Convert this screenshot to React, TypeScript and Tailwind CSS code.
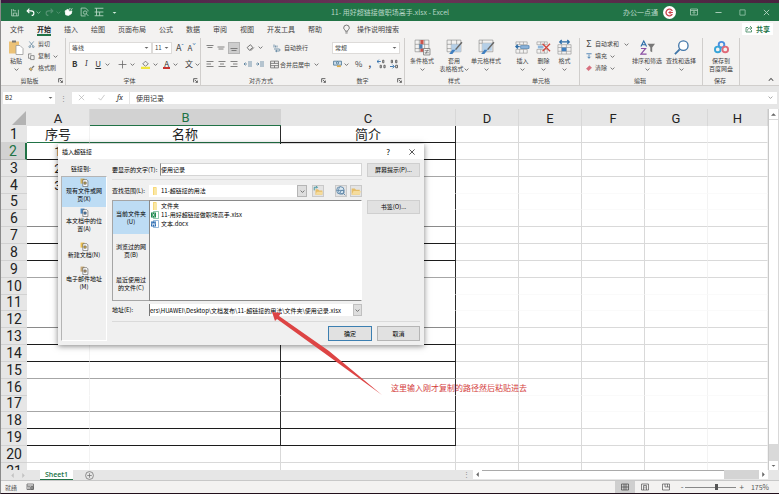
import React from 'react';

type SvgProps = React.PropsWithChildren<{ className?: string; box?: string }>;

const Svg: React.FC<SvgProps> = ({ className = 'w-[11px] h-[11px] text-[#555]', box = '0 0 16 16', children }) => (
  <svg viewBox={box} className={`shrink-0 ${className}`} fill="none" stroke="currentColor" strokeWidth="1.4" aria-hidden="true">
    {children}
  </svg>
);

const Caret: React.FC<{ className?: string }> = ({ className = 'text-[#666]' }) => (
  <Svg box="0 0 8 8" className={`w-[5px] h-[5px] ${className}`}>
    <path d="M1 2.5l3 3 3-3" />
  </Svg>
);

const Solid: React.FC<{ d: string; className?: string }> = ({ d, className = 'text-[#666]' }) => (
  <svg viewBox="0 0 8 8" className={`w-[5px] h-[5px] shrink-0 ${className}`} fill="currentColor" aria-hidden="true">
    <path d={d} />
  </svg>
);

const DOWN = 'M1 3h6L4 6z';
const UP = 'M0 6h8L4 2z';
const LEFT = 'M6 0v8L2 4z';
const RIGHT = 'M2 0v8l4-4z';

/* ---------- title bar ---------- */

const TitleBar = () => (
  <header className="flex h-[18px] shrink-0 items-center bg-[#217346] text-[7px] text-[#b9d8c6]">
    <div className="flex flex-1 items-center pl-[9px]">
      <button aria-label="保存" className="mr-[6px]">
        <Svg className="h-[9px] w-[10px]"><path d="M2 2v12h12V3M5 14V9h6v5M5 2v3h5" /></Svg>
      </button>
      <button aria-label="撤消" className="mr-px text-white">
        <Svg className="h-[10px] w-[9px]"><path d="M6 2L2 6l4 4M2 6h7c7 0 6 8 1 8" strokeWidth="2" /></Svg>
      </button>
      <Caret className="text-[#8fc0a5]" />
      <button aria-label="恢复" className="ml-[4px] mr-[2px] text-[#559273]">
        <Svg className="h-[10px] w-[9px]"><path d="M10 2l4 4-4 4M14 6H7c-7 0-6 8-1 8" strokeWidth="2" /></Svg>
      </button>
      <Caret className="text-[#559273]" />
      <button aria-label="触摸" className="ml-[3px] mr-[7px] text-white">
        <Svg className="h-[10px] w-[9px]"><path d="M2 6l5-3 3 4 4-1-1 5-5 3-5-1z" fill="currentColor" /><path d="M9 4l2-3M12 4l3-2" /></Svg>
      </button>
      <button aria-label="打印预览" className="mr-[5px]">
        <Svg className="h-[10px] w-[9px]"><path d="M10 15H2V1h8l4 4v2" /><circle cx="9" cy="9" r="3" /><path d="M11 11l4 4" /></Svg>
      </button>
      <button aria-label="边框" className="mr-[8px]">
        <Svg className="h-[10px] w-[10px]"><path d="M1 2h14M1 8h14M1 14h14M4 2v12M9 8v6" /></Svg>
      </button>
      <Solid d={DOWN} className="text-[#d5eadd]" />
    </div>
    <h1 className="whitespace-pre">11- 用好超链接做职场高手.xlsx - Excel</h1>
    <div className="flex flex-1 items-center justify-end pr-[9px]">
      <span className="mr-[5px]">办公一点通</span>
      <span className="mr-[14px] flex h-[13px] w-[13px] items-center justify-center rounded-full bg-white">
        <Svg className="h-[9px] w-[9px] text-[#c8434b]"><path d="M13 5a6 6 0 100 6" strokeWidth="2.4" /><path d="M6 8h8M9 5v6" strokeWidth="2" /></Svg>
      </span>
      <button aria-label="功能区显示选项" className="mr-[17px]">
        <Svg className="h-[8px] w-[8px]"><path d="M1 2h14v12H1zM1 5h14M8 13V7M5 10l3-3 3 3" /></Svg>
      </button>
      <button aria-label="最小化" className="mr-[17px]">
        <Svg className="h-[7px] w-[7px]"><path d="M1 8h14" strokeWidth="2" /></Svg>
      </button>
      <button aria-label="最大化" className="mr-[17px] text-[#8fc0a5]">
        <Svg className="h-[7px] w-[7px]"><path d="M2 2h12v12H2z" strokeWidth="2" /></Svg>
      </button>
      <button aria-label="关闭">
        <Svg className="h-[7px] w-[7px]"><path d="M2 2l12 12M14 2L2 14" strokeWidth="2" /></Svg>
      </button>
    </div>
  </header>
);

/* ---------- ribbon ---------- */

const TABS = ['文件', '开始', '插入', '绘图', '页面布局', '公式', '数据', '审阅', '视图', '开发工具', '帮助'];

const TabStrip = () => (
  <nav className="flex h-[16px] shrink-0 items-center bg-[#f3f2f1] pl-[9px] pr-[6px] text-[7px] text-[#444]">
    <div className="flex items-center gap-[13px]">
      {TABS.map(tab => (
        <button
          key={tab}
          className={tab === '开始'
            ? 'h-[13px] border-b-2 border-[#217346] font-bold leading-[12px] text-[#222]'
            : 'h-[13px] border-b-2 border-transparent leading-[12px]'}
        >
          {tab}
        </button>
      ))}
    </div>
    <button className="ml-[20px] flex items-center gap-[6px]">
      <Svg className="h-[10px] w-[9px] text-[#555]"><path d="M6 12c0-3-3-3-3-6a5 5 0 0110 0c0 3-3 3-3 6zM6 15h4" /></Svg>
      操作说明搜索
    </button>
    <button className="ml-auto flex h-[12px] w-[31px] items-center justify-center gap-[3px] bg-white font-bold text-[#217346]">
      <Svg className="h-[8px] w-[8px]"><path d="M6 5H2v9h11v-4M5 11c0-4 3-5 8-5M10 2l4 4-4 4" /></Svg>
      共享
    </button>
  </nav>
);

const Group: React.FC<React.PropsWithChildren<{ label: string; className: string; launcher?: boolean }>> = ({ label, className, launcher, children }) => (
  <section className={`flex shrink-0 flex-col ${className}`}>
    <div className="h-[37px]">{children}</div>
    <div className="flex h-[10px] items-center pr-[2px]">
      <span className="flex-1 text-center">{label}</span>
      {launcher && (
        <button aria-label={`${label}设置`}>
          <Svg className="h-[5px] w-[5px] text-[#555]" box="0 0 8 8"><path d="M1 7V1h6M3 3l4 4M7 4v3H4" /></Svg>
        </button>
      )}
    </div>
  </section>
);

const BigButton: React.FC<React.PropsWithChildren<{ lines: string[]; className?: string; caretAfter?: boolean }>> = ({ lines, className = '', caretAfter, children }) => (
  <button className={`flex shrink-0 flex-col items-center pt-px leading-[8px] ${className}`}>
    {children}
    <span className="mt-[1px] whitespace-nowrap">{lines[0]}</span>
    {lines[1]
      ? <span className="flex items-center whitespace-nowrap">{lines[1]}{caretAfter && <Caret />}</span>
      : <span className="flex h-[8px] items-center"><Caret /></span>}
  </button>
);

const Lines: React.FC<{ d: string }> = ({ d }) => (
  <Svg className="h-[10px] w-[8px] text-[#666]"><path d={d} strokeWidth="1.6" /></Svg>
);

const Rule = () => <span className="h-[11px] w-px bg-[#d5d3d1]" />;

const ICON = 'w-[17px] h-[17px] text-[#777]';

const Ribbon = () => (
  <div className="flex h-[49px] shrink-0 overflow-hidden border-b border-[#d0cecc] bg-[#f3f2f1] pt-[1px] text-[6px] text-[#444]">
    <Group label="剪贴板" launcher className="w-[65px] border-r border-[#d0cecc]">
      <div className="flex">
        <BigButton lines={['粘贴']} className="ml-[6px] w-[18px]">
          <Svg className="h-[17px] w-[16px]">
            <path d="M1 2h10v12H1z" fill="#ecc277" stroke="none" />
            <path d="M4 1h4v2H4z" fill="#777" stroke="none" />
            <path d="M8 6h4l3 3v6H8z" fill="#fff" stroke="#999" strokeWidth=".8" />
          </Svg>
        </BigButton>
        <div className="ml-[3px] flex flex-col leading-[12px]">
          <button className="flex items-center gap-[3px]">
            <Svg className="h-[9px] w-[7px] text-[#44708f]"><path d="M3 1l8 10M13 1L5 11" /><circle cx="4" cy="13" r="2" /><circle cx="12" cy="13" r="2" /></Svg>剪切
          </button>
          <button className="flex items-center gap-[3px]">
            <Svg className="h-[9px] w-[7px] text-[#555]"><path d="M6 12H1V2h7M6 6h8v9H6z" /></Svg>复制<Caret />
          </button>
          <button className="flex items-center gap-[3px]">
            <Svg className="h-[9px] w-[7px] text-[#777]"><path d="M2 9l5 5 3-5-4-3z" fill="#e8b95b" /><path d="M9 7l5-5" strokeWidth="3" /></Svg>格式刷
          </button>
        </div>
      </div>
    </Group>

    <Group label="字体" launcher className="w-[135px] border-r border-[#d0cecc]">
      <div className="flex h-[19px] items-center pl-[3px]">
        <button className="flex h-[12px] w-[83px] items-center justify-between border border-[#dddbd9] bg-white px-[2px]">等线<Solid d={DOWN} /></button>
        <button className="flex h-[12px] w-[20px] items-center justify-between border border-[#dddbd9] bg-white px-[2px]">11<Solid d={DOWN} /></button>
        <button className="ml-[4px] flex text-[9px] leading-[10px]">A<span className="text-[6px] leading-[6px] text-[#2b6ca8]">ˆ</span></button>
        <button className="ml-[4px] flex text-[8px] leading-[10px]">A<span className="text-[6px] leading-[6px] text-[#2b6ca8]">ˇ</span></button>
      </div>
      <div className="flex h-[14px] items-center pl-[6px] text-[8px] text-[#333]">
        <button className="mr-[7px] font-bold">B</button>
        <button className="mr-[7px] w-[5px] font-serif italic">I</button>
        <button className="mr-[4px] underline">U</button>
        <Caret />
        <span className="ml-[4px] mr-[4px]"><Rule /></span>
        <Svg className="mr-[3px] h-[9px] w-[9px] text-[#666]"><path d="M8 1v14M1 8h14" /></Svg>
        <Caret />
        <span className="mx-[3px]"><Rule /></span>
        <Svg className="mr-[3px] h-[11px] w-[9px] text-[#666]"><path d="M3 7l5-5 5 5-5 4z" /><path d="M0 14h16" stroke="#f0e63c" strokeWidth="4" /></Svg>
        <Caret />
        <button className="ml-[5px] mr-[3px] h-[10px] border-b-2 border-[#c8322f] px-[1px] leading-[9px]">A</button>
        <Caret />
        <span className="ml-[4px] mr-[3px]"><Rule /></span>
        <button className="mr-[2px] text-[8px]">文</button>
        <Caret />
      </div>
    </Group>

    <Group label="对齐方式" launcher className="w-[127px]">
      <div className="flex h-[19px] items-center gap-[3px] pl-[5px]">
        <Lines d="M1 3h14M3 7h10" />
        <Lines d="M1 6h14M3 10h10" />
        <span className="flex h-[12px] w-[12px] items-center justify-center border border-[#b5b5b5] bg-[#cdcdcd]"><Lines d="M1 9h14M3 13h10" /></span>
        <Svg className="ml-[3px] h-[9px] w-[9px] text-[#555]"><path d="M2 8l6-5 4 5-6 5zM8 14l6-6" /></Svg>
        <Caret />
        <button className="ml-[7px] flex items-center gap-[3px]">
          <Svg className="h-[10px] w-[8px] text-[#44708f]"><path d="M2 1v6M5 3v4M8 3v4M2 10h10c3 0 3 4 0 4H6M8 12l-3 2 3 2" /></Svg>自动换行
        </button>
      </div>
      <div className="flex h-[14px] items-center gap-[4px] pl-[5px]">
        <Lines d="M1 3h14M1 8h9M1 13h14" />
        <Lines d="M1 3h14M4 8h8M1 13h14" />
        <Lines d="M1 3h14M6 8h9M1 13h14" />
        <span className="ml-[2px] flex gap-[4px]">
          <Svg className="h-[10px] w-[8px] text-[#44708f]"><path d="M8 4h8M8 8h8M8 12h8M6 8H0M3 5L0 8l3 3" /></Svg>
          <Svg className="h-[10px] w-[8px] text-[#44708f]"><path d="M8 4h8M8 8h8M8 12h8M0 8h6M3 5l3 3-3 3" /></Svg>
        </span>
        <button className="ml-[2px] flex items-center gap-[1px] whitespace-nowrap">
          <Svg className="h-[9px] w-[9px] text-[#666]"><path d="M1 2h14v12H1zM1 6h14M1 10h14M8 2v4M8 10v4" /></Svg>合并后居中
        </button>
        <Caret />
      </div>
    </Group>

    <Group label="数字" launcher className="w-[77px] border-r border-[#d0cecc]">
      <div className="flex h-[19px] items-center pl-[4px]">
        <button className="flex h-[12px] w-[68px] items-center justify-between border border-[#dddbd9] bg-white px-[2px]">常规<Solid d={DOWN} /></button>
      </div>
      <div className="flex h-[14px] items-center pl-[5px] text-[8px]">
        <Svg className="mr-[2px] h-[10px] w-[9px] text-[#44708f]"><path d="M1 3h14v7H1z" fill="#cfe0ee" /><circle cx="8" cy="6" r="2" /><path d="M7 12h7" stroke="#ddaa44" strokeWidth="3" /></Svg>
        <Caret />
        <span className="ml-[6px]">%</span>
        <span className="ml-[6px] w-[4px] font-bold">,</span>
        <Svg className="ml-[5px] h-[10px] w-[10px] text-[#555]"><path d="M6 4H0M3 1L0 4l3 3" stroke="#2b6ca8" /><path d="M9 2h2v4H9zM5 10h2v4H5zM11 10h2v4h-2z" /></Svg>
        <Svg className="ml-[3px] h-[10px] w-[10px] text-[#555]"><path d="M2 2h2v4H2zM9 2h2v4H9zM9 10h3v4H9z" /><path d="M0 12h6M4 9l3 3-3 3" stroke="#2b6ca8" /></Svg>
      </div>
    </Group>

    <Group label="样式" className="w-[100px]">
      <div className="flex">
        <BigButton lines={['条件格式']} className="w-[34px]">
          <Svg className={ICON}>
            <path d="M1 1h13v11H1zM5 1v11M10 1v11M1 5h13M1 9h13" strokeWidth=".5" />
            <path d="M6 1h3v4H6zM6 9h3v3H6z" fill="#c9554d" stroke="none" /><path d="M5 5h3v4H5z" fill="#4d7fb3" stroke="none" />
            <path d="M9 9h6v6H9z" fill="#fff" strokeWidth=".8" /><path d="M10 11h4M10 13h4M13 10l-2 4" strokeWidth=".8" />
          </Svg>
        </BigButton>
        <BigButton lines={['套用', '表格格式']} caretAfter className="w-[30px]">
          <Svg className={ICON}>
            <path d="M1 1h13v11H1zM5 1v11M10 1v11M1 5h13M1 9h13" strokeWidth=".5" />
            <path d="M5 5h9v7H5z" fill="#b5cfe7" stroke="none" /><path d="M15 3L9 10" stroke="#666" strokeWidth="1.4" /><path d="M9 10l-3 4H3l3-4z" fill="#3f7fc0" stroke="none" />
          </Svg>
        </BigButton>
        <BigButton lines={['单元格样式']} className="w-[34px]">
          <Svg className={ICON}>
            <path d="M1 1h13v11H1zM4 1v11M1 4h13" strokeWidth=".5" />
            <path d="M4 4h9v7H4z" fill="#b5cfe7" stroke="none" /><path d="M15 3L9 10" stroke="#666" strokeWidth="1.4" /><path d="M9 10l-3 4H3l3-4z" fill="#3f7fc0" stroke="none" />
          </Svg>
        </BigButton>
      </div>
    </Group>

    <Group label="单元格" className="w-[75px] border-r border-[#d0cecc]">
      <div className="flex pl-[7px]">
        <BigButton lines={['插入']} className="w-[21px]">
          <Svg className="h-[17px] w-[15px] text-[#999]">
            <path d="M1 2h12v3H1zM1 10h12v4H1zM5 2v3M9 2v3M5 10v4M9 10v4" strokeWidth=".7" /><path d="M6 6h9v3H6z" fill="#8fb7dd" stroke="#3f75a8" strokeWidth=".7" /><path d="M5 7H1M3 5L1 7l2 2" stroke="#2b6ca8" />
          </Svg>
        </BigButton>
        <BigButton lines={['删除']} className="w-[21px]">
          <Svg className="h-[17px] w-[15px] text-[#999]">
            <path d="M1 2h11v3H1zM1 10h11v4H1zM5 2v3M9 2v3M5 10v4M9 10v4" strokeWidth=".7" /><path d="M2 6h6v3H2z" fill="#8fb7dd" stroke="none" /><path d="M7 4l8 8M15 4l-8 8" stroke="#d0473f" />
          </Svg>
        </BigButton>
        <BigButton lines={['格式']} className="w-[21px]">
          <Svg className="h-[17px] w-[15px] text-[#999]">
            <path d="M1 5h14v10H1zM5 5v10M10 5v10M1 8h14M1 12h14" strokeWidth=".7" /><path d="M5 8h5v4H5z" fill="#3f7fc0" stroke="none" /><path d="M3 2h10M5 0L3 2l2 2M11 0l2 2-2 2" stroke="#2b6ca8" />
          </Svg>
        </BigButton>
      </div>
    </Group>

    <Group label="编辑" className="w-[123px] border-r border-[#d0cecc]">
      <div className="flex">
        <div className="flex w-[50px] flex-col pl-[6px] leading-[12px]">
          <button className="flex items-center gap-[3px] whitespace-nowrap"><span className="w-[6px] text-[9px]">Σ</span>自动求和<span className="ml-[2px]"><Caret /></span></button>
          <button className="flex items-center gap-[3px]"><Svg className="h-[8px] w-[6px] text-[#2b6ca8]"><path d="M1 2h14M8 4v10M4 10l4 4 4-4" strokeWidth="2" /></Svg>填充<Caret /></button>
          <button className="flex items-center gap-[3px]"><Svg className="h-[8px] w-[6px] text-[#d8707f]"><path d="M1 10l8-8 6 5-8 8z" fill="currentColor" /></Svg>清除<Caret /></button>
        </div>
        <BigButton lines={['排序和筛选']} className="w-[34px]">
          <Svg className="h-[17px] w-[15px] text-[#777]">
            <path d="M1 7l3-6 3 6M2 5h4" stroke="#2b6ca8" strokeWidth="1.2" /><path d="M1 9h5l-5 6h6" stroke="#8a4fa3" strokeWidth="1.2" /><path d="M8 4h8l-3 4v5l-2-1V8z" fill="currentColor" stroke="none" />
          </Svg>
        </BigButton>
        <BigButton lines={['查找和选择']} className="w-[34px]">
          <Svg className="h-[17px] w-[15px] text-[#3f75a8]"><circle cx="10" cy="6" r="5" fill="#fff" /><path d="M6 10l-5 5" strokeWidth="2" /></Svg>
        </BigButton>
      </div>
    </Group>

    <Group label="保存" className="w-[37px] border-r border-[#d0cecc]">
      <BigButton lines={['保存到', '百度网盘']} className="w-full">
        <Svg className="h-[17px] w-[15px]"><circle cx="8" cy="5" r="3" stroke="#4a8fe0" strokeWidth="2" /><circle cx="4" cy="10" r="3" stroke="#37a4d8" strokeWidth="2" /><circle cx="12" cy="10" r="3" stroke="#e06a78" strokeWidth="2" /></Svg>
      </BigButton>
    </Group>
    <button aria-label="折叠功能区" className="ml-auto self-end pb-[2px] pr-[5px]">
      <Svg className="h-[6px] w-[6px] text-[#555]" box="0 0 8 8"><path d="M1 5l3-3 3 3" /></Svg>
    </button>
  </div>
);

const FormulaBar = () => (
  <div className="flex h-[23px] shrink-0 items-center bg-[#e6e6e6] px-[2px] text-[7px] text-[#333]">
    <button className="flex h-[12px] w-[52px] items-center justify-between bg-white px-[2px] text-[6px]">B2<Solid d={DOWN} /></button>
    <span className="w-[17px] text-center leading-[12px] text-[#888]">⋮</span>
    <div className="flex h-[12px] w-[57px] items-center justify-around bg-white">
      <Svg className="h-[7px] w-[7px] text-[#aaa]"><path d="M2 2l12 12M14 2L2 14" /></Svg>
      <Svg className="h-[7px] w-[7px] text-[#aaa]"><path d="M1 9l5 5L15 2" /></Svg>
      <span className="font-serif text-[8px] italic">fx</span>
    </div>
    <input aria-label="编辑栏" defaultValue="使用记录" className="ml-[1px] h-[12px] min-w-0 flex-1 bg-white pl-[6px] outline-none" />
    <span className="flex h-[12px] w-[9px] items-center bg-white"><Caret className="text-[#999]" /></span>
  </div>
);

/* ---------- sheet ---------- */

const COLUMNS = ['A', 'B', 'C', 'D', 'E', 'F', 'G', 'H'];
const ROWS = Array.from({ length: 21 }, (_, i) => i + 1);

const CELLS: Record<string, string> = { A1: '序号', B1: '名称', C1: '简介', A2: '1', A3: '2', A4: '3' };

const rowLine = (row: number, inTable: boolean) => {
  if (!inTable || row > 19) {
    if (row % 6 === 4 || row % 6 === 5) return 'border-b border-b-[#fafafa]';
    return 'border-b border-b-[#d9d9d9]';
  }
  if (row === 17) return 'border-b border-b-[#a6a6a6]';
  if (row % 6 === 4 || row % 6 === 5) return 'border-b border-b-white';
  if (row % 6 === 3) return 'border-b border-b-[#a6a6a6]';
  if (row % 6 === 0 && row < 18) return 'border-b border-b-[#8a8a8a]';
  return 'border-b border-b-[#1c1c1c]';
};

const colLine = (col: string, row: number) => {
  if ((col === 'B' || col === 'C') && row < 20) return 'border-r border-r-[#2b2b2b]';
  if (col === 'A' || col === 'G' || col === 'H') return 'border-r border-r-[#f3f3f3]';
  return 'border-r border-r-[#d9d9d9]';
};

const cellClass = (col: string, row: number) => {
  if (row === 1 && (col === 'A' || col === 'B')) return `border-b border-b-[#217346] ${colLine(col, row)}`;
  return `${rowLine(row, col < 'D')} ${colLine(col, row)}`;
};

const Sheet = () => (
  <div className="flex min-h-0 flex-1 bg-[#e6e6e6]">
    <div className="min-w-0 flex-1 overflow-hidden">
      <table className="w-full table-fixed border-separate border-spacing-0 bg-white font-[Roboto,'Noto_Sans_CJK_SC',sans-serif] text-[13px] leading-[15px]">
        <colgroup>
          <col className="w-[26px]" />
          <col className="w-[63px]" />
          <col className="w-[191px]" />
          <col className="w-[175px]" />
          <col className="w-[63px]" />
          <col className="w-[63px]" />
          <col className="w-[63px]" />
          <col className="w-[63px]" />
          <col />
        </colgroup>
        <thead>
          <tr className="h-[17px]">
            <th className="bg-[#e6e6e6] p-0">
              <svg viewBox="0 0 14 14" className="ml-auto mr-px h-[14px] w-[14px]" aria-hidden="true"><path d="M14 0v14H0z" fill="#b3b3b3" /></svg>
            </th>
            {COLUMNS.map(col => (
              <th
                key={col}
                className={col === 'B'
                  ? 'border-b border-[#217346] bg-[#d2d2d2] p-0 align-bottom text-[13px] font-normal text-[#217346]'
                  : 'border-r border-[#d8d8d8] bg-[#e6e6e6] p-0 align-bottom text-[13px] font-normal text-[#222]'}
              >
                {col}
              </th>
            ))}
          </tr>
        </thead>
        <tbody>
          {ROWS.map(row => (
            <tr key={row} className={row % 6 === 5 ? 'h-[16px]' : 'h-[17px]'}>
              <th className={row === 2
                ? 'border-r-2 border-b border-r-[#217346] border-b-[#bbb] bg-[#d2d2d2] p-0 text-[14px] font-normal leading-[15px] text-[#217346]'
                : 'border-b border-[#d2d2d2] bg-[#e6e6e6] p-0 text-[14px] font-normal leading-[15px] text-[#222]'}
              >
                {row}
              </th>
              {COLUMNS.map(col => (
                <td key={col} className={`overflow-hidden p-0 text-center text-[#222] ${cellClass(col, row)}`}>
                  {CELLS[col + row]}
                </td>
              ))}
            </tr>
          ))}
        </tbody>
      </table>
    </div>
    <div className="flex w-[11px] flex-col border-l border-[#c8c8c8] bg-[#d9d9d9] pr-px">
      <button aria-label="向上滚动" className="flex h-[10px] items-center justify-center bg-white"><Solid d={UP} /></button>
      <div className="mt-px flex-1 bg-white" />
      <div className="h-[17px]" />
      <button aria-label="向下滚动" className="flex h-[9px] items-center justify-center bg-white"><Solid d={DOWN} /></button>
    </div>
  </div>
);

const SheetTabs = () => (
  <div className="flex h-[11px] shrink-0 items-start border-b border-[#c8c8c8] bg-[#e6e6e6] text-[7px]">
    <div className="flex h-[10px] w-[39px] items-center gap-[6px] pl-[9px]">
      <Solid d={LEFT} className="text-[#c2c2c2]" />
      <Solid d={RIGHT} className="text-[#c2c2c2]" />
    </div>
    <button className="h-[10px] w-[33px] border-b border-[#217346] bg-white text-center font-[Open_Sans] font-semibold leading-[9px] text-[#217346]">Sheet1</button>
    <button aria-label="新工作表" className="ml-[12px] flex h-[10px] items-center">
      <Svg className="h-[9px] w-[9px] text-[#777]"><circle cx="8" cy="8" r="7" /><path d="M8 4v8M4 8h8" /></Svg>
    </button>
    <div className="ml-auto flex h-[9px] w-[316px] items-center">
      <span className="mr-[2px] w-[8px] text-[#888]">⋮</span>
      <button aria-label="向左滚动" className="flex h-[9px] w-[9px] items-center justify-center bg-white"><Solid d={LEFT} /></button>
      <div className="h-[9px] flex-1 border-t border-[#aaa] bg-white" />
      <div className="h-[9px] w-[35px] bg-[#d4d4d4]" />
      <button aria-label="向右滚动" className="mr-[11px] flex h-[9px] w-[9px] items-center justify-center bg-white"><Solid d={RIGHT} /></button>
    </div>
  </div>
);

const StatusBar = () => (
  <footer className="flex h-[12px] shrink-0 items-center bg-[#f3f2f1] pl-[4px] pr-[10px] text-[6px] text-[#555]">
    就绪
    <Svg className="ml-[9px] h-[8px] w-[9px] text-[#555]"><path d="M1 2h13v11H1zM1 6h13M5 6v7" /><circle cx="11" cy="10" r="3" fill="#999" /></Svg>
    <div className="ml-auto flex h-full items-center">
      <button aria-label="普通" className="flex h-full w-[20px] items-center justify-center bg-[#cfcfcf]">
        <Svg className="h-[8px] w-[8px] text-[#444]"><path d="M1 2h14v12H1zM1 8h14M6 2v12M10 2v12" /></Svg>
      </button>
      <button aria-label="页面布局" className="flex w-[21px] justify-center">
        <Svg className="h-[8px] w-[8px] text-[#555]"><path d="M1 2h14v12H1zM5 14V5h6v9M8 7v4" /></Svg>
      </button>
      <button aria-label="分页预览" className="flex w-[21px] justify-center">
        <Svg className="h-[8px] w-[8px] text-[#555]"><path d="M1 2h14v12H1zM6 2v6h5V2M11 8h4" /></Svg>
      </button>
      <span className="ml-[4px] mr-[2px] text-[8px] leading-[8px]">-</span>
      <input
        type="range"
        aria-label="缩放"
        min={10}
        max={400}
        defaultValue={250}
        className="h-px w-[51px] appearance-none bg-[#888] [&::-webkit-slider-thumb]:h-[6px] [&::-webkit-slider-thumb]:w-[3px] [&::-webkit-slider-thumb]:appearance-none [&::-webkit-slider-thumb]:bg-[#555]"
      />
      <span className="ml-[3px] text-[8px] leading-[8px]">+</span>
      <span className="ml-[7px] text-[7px]">175%</span>
    </div>
  </footer>
);

/* ---------- insert hyperlink dialog ---------- */

const LINK_TARGETS = [
  { lines: ['现有文件或网', '页(X)'], tint: '#d5b45c', className: 'h-[30px] pt-px bg-[#bddcf4]' },
  { lines: ['本文档中的位', '置(A)'], tint: '#4d8ac6', className: 'h-[35px] pt-px' },
  { lines: ['新建文档(N)'], tint: '#f0c24c', className: 'h-[24px]' },
  { lines: ['电子邮件地址', '(M)'], tint: '#c9ab78', className: 'h-[28px]' },
];

const PLACES = [
  { lines: ['当前文件夹', '(U)'], className: 'bg-[#bddcf4]' },
  { lines: ['浏览过的网', '页(B)'], className: '' },
  { lines: ['最近使用过', '的文件(C)'], className: '' },
];

const Folder: React.FC<{ className?: string }> = ({ className = '' }) => (
  <svg viewBox="0 0 8 8" className={`h-[8px] w-[8px] shrink-0 ${className}`} aria-hidden="true">
    <path d="M2 0h3l1 1v7H2z" fill="#f7d878" /><path d="M3 1h3v7H3z" fill="#fae7a5" />
  </svg>
);

const FileBadge: React.FC<{ kind: 'xlsx' | 'docx' }> = ({ kind }) => (
  <svg viewBox="0 0 16 16" className="h-[8px] w-[8px] shrink-0" aria-hidden="true">
    <path d="M5 1h10v14H5z" fill="#fff" stroke={kind === 'xlsx' ? '#23905a' : '#3575b5'} />
    <path d="M0 3h10v10H0z" fill={kind === 'xlsx' ? '#1f8a50' : '#2b6cb3'} />
    <path d={kind === 'xlsx' ? 'M3 5l4 6M7 5l-4 6' : 'M2 5l1 6 2-4 2 4 1-6'} stroke="#fff" fill="none" strokeWidth="1.4" />
  </svg>
);

const ToolButton: React.FC<React.PropsWithChildren<{ label: string; className?: string }>> = ({ label, className = '', children }) => (
  <button aria-label={label} className={`flex h-[12px] w-[12px] items-center justify-center border border-[#c9c9c9] bg-[#e4e4e4] ${className}`}>
    {children}
  </button>
);

const HyperlinkDialog = () => (
  <div role="dialog" aria-label="插入超链接" className="absolute left-[57px] top-[144px] w-[366px] bg-[#f0f0f0] text-[6px] leading-[8px] text-black shadow-[0_1px_6px_rgba(0,0,0,0.5)]">
    <div className="flex h-[15px] items-center bg-white pl-[4px] pr-[9px]">
      <h2 className="flex-1">插入超链接</h2>
      <button aria-label="帮助" className="mr-[19px] text-[8px]">?</button>
      <button aria-label="关闭对话框"><Svg className="h-[6px] w-[6px] text-[#222]"><path d="M1 1l14 14M15 1L1 15" strokeWidth="2" /></Svg></button>
    </div>
    <div className="flex gap-[5px] pb-[4px] pl-[3px] pr-[4px] pt-[4px]">
      <div className="w-[46px] shrink-0">
        <div className="h-[13px] pl-[10px] leading-[12px]">链接到:</div>
        <div className="h-[165px] border border-[#b4b4b4] border-b-white border-r-white">
          {LINK_TARGETS.map(({ lines, tint, className }) => (
            <button key={lines[0]} className={`flex w-full flex-col items-center whitespace-nowrap ${className}`}>
              <Svg className="h-[9px] w-[9px] shrink-0 text-[#444]">
                <path d="M1 1h7v9H1z" fill={tint} stroke="none" />
                <path d="M5 3h7l2 2v10H5z" fill="#fff" strokeWidth="1" /><path d="M7 7h4v4H7z" fill={tint} strokeWidth="1" />
              </Svg>
              {lines.map(line => <span key={line}>{line}</span>)}
            </button>
          ))}
        </div>
      </div>

      <div className="min-w-0 flex-1">
        <div className="flex h-[14px]">
          <label htmlFor="display-text" className="w-[48px] whitespace-nowrap leading-[13px]">要显示的文字(T):</label>
          <input id="display-text" defaultValue="使用记录" className="h-[13px] min-w-0 flex-1 border border-[#d5d5d5] border-l-[#888] bg-white outline-none" />
          <button className="ml-[5px] h-[14px] w-[53px] border border-[#cfcfcf] bg-[#e1e1e1]">屏幕提示(P)...</button>
        </div>
        <div className="mr-[58px] mt-[2px] border-t border-[#e0e0e0]" />
        <div className="mr-[58px] mt-[5px] flex h-[12px] items-center">
          <label htmlFor="look-in" className="w-[37px] shrink-0 whitespace-nowrap">查找范围(L):</label>
          <div className="relative h-[12px] min-w-0 flex-1">
            <select id="look-in" className="h-full w-full appearance-none bg-white pl-[12px] outline-none">
              <option>11-超链接的用法</option>
            </select>
            <Folder className="pointer-events-none absolute left-[2px] top-[2px]" />
            <span className="pointer-events-none absolute right-0 top-0 flex h-[12px] w-[10px] items-center justify-center border border-[#b5b5b5] bg-[#dedede]"><Caret /></span>
          </div>
          <ToolButton label="上一级文件夹" className="ml-[5px]">
            <Svg className="h-[10px] w-[10px]"><path d="M4 5h4l2 2h5v7H4z" fill="#e6bd68" stroke="none" /><path d="M6 9h10l-2 5H4z" fill="#f5dc9d" stroke="none" /><path d="M2 7V2h5M5 0l2 2-2 2" stroke="#3a8f9a" /></Svg>
          </ToolButton>
          <ToolButton label="浏览 Web" className="ml-[11px]">
            <Svg className="h-[10px] w-[10px] text-[#5d83a5]"><circle cx="7" cy="7" r="6" fill="#dcebf5" /><path d="M1 7h12M7 1c-4 4-4 8 0 12" /><circle cx="10" cy="10" r="3" /><path d="M12 12l3 3" /></Svg>
          </ToolButton>
          <ToolButton label="浏览文件" className="ml-[3px]">
            <Svg className="h-[10px] w-[10px]"><path d="M1 4h5l2 2h6v8H1z" fill="#e6bd68" stroke="none" /><path d="M4 8h12l-2 6H1z" fill="#f5dc9d" stroke="none" /></Svg>
          </ToolButton>
        </div>
        <div className="mt-[3px] flex h-[101px]">
          <div className="w-[37px] shrink-0 border border-r-0 border-[#a5a5a5]">
            {PLACES.map(({ lines, className }) => (
              <button key={lines[0]} className={`flex h-[33px] w-full flex-col items-center justify-center whitespace-nowrap ${className}`}>
                {lines.map(line => <span key={line}>{line}</span>)}
              </button>
            ))}
          </div>
          <ul className="min-w-0 flex-1 border border-[#8a8a8a] border-r-white bg-white pl-px leading-[9px]">
            <li className="flex items-center gap-[2px]"><Folder />文件夹</li>
            <li className="flex items-center gap-[2px]"><FileBadge kind="xlsx" />11-用好超链接做职场高手.xlsx</li>
            <li className="flex items-center gap-[2px]"><FileBadge kind="docx" />文本.docx</li>
          </ul>
          <button className="ml-[5px] h-[14px] w-[53px] border border-[#cfcfcf] bg-[#e1e1e1]">书签(O)...</button>
        </div>
        <div className="mr-[58px] mt-[3px] flex h-[12px] items-center">
          <label htmlFor="address" className="w-[37px] shrink-0">地址(E):</label>
          <input id="address" defaultValue="ers\HUAWEI\Desktop\文档发布\11-超链接的用法\文件夹\使用记录.xlsx" className="h-[12px] min-w-0 flex-1 border-l border-[#777] bg-white outline-none" />
          <button aria-label="地址列表" className="flex h-[12px] w-[9px] items-center justify-center border border-[#c0c0c0] bg-[#dedede]"><Caret /></button>
        </div>
        <div className="mt-[5px] border-t border-[#dadada]" />
        <div className="mt-[4px] flex justify-end gap-[5px]">
          <button className="h-[15px] w-[44px] border border-[#3c7fb1] bg-[#e1e1e1]">确定</button>
          <button className="h-[15px] w-[43px] border border-[#b5b5b5] bg-[#e1e1e1]">取消</button>
        </div>
      </div>
    </div>
  </div>
);

const Annotation = () => (
  <>
    <svg viewBox="0 0 112 84" className="pointer-events-none absolute left-[271px] top-[312px] h-[84px] w-[112px]" aria-hidden="true">
      <path d="M0 0l9 1-2 3 50 35 53 44-55-40L5 7l-2 2z" fill="#dd4444" />
    </svg>
    <p className="absolute left-[390px] top-[382px] whitespace-nowrap text-[8px] leading-[12px] text-[#d43c3c]">这里输入刚才复制的路径然后粘贴进去</p>
  </>
);

export default function App() {
  return (
    <div className="relative flex h-screen flex-col overflow-hidden border-b border-l border-b-[#22101c] border-l-[#8a8a8a] font-['Noto_Sans_CJK_SC',sans-serif]">
      <div className="h-[3px] shrink-0 bg-linear-to-r from-[#3a1c40] via-[#6d3558] to-[#4a2440]" />
      <TitleBar />
      <TabStrip />
      <Ribbon />
      <FormulaBar />
      <Sheet />
      <SheetTabs />
      <StatusBar />
      <HyperlinkDialog />
      <Annotation />
    </div>
  );
}
